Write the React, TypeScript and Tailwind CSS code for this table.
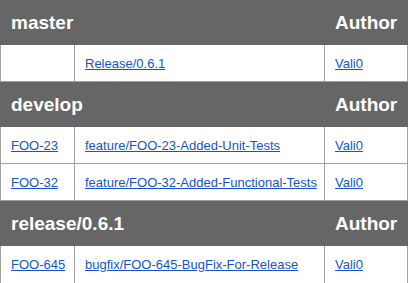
import React from "react";

type Row = { id: string; branch: string; author: string };
type Section = { name: string; rows: Row[] };

const sections: Section[] = [
  { name: "master", rows: [{ id: "", branch: "Release/0.6.1", author: "Vali0" }] },
  {
    name: "develop",
    rows: [
      { id: "FOO-23", branch: "feature/FOO-23-Added-Unit-Tests", author: "Vali0" },
      { id: "FOO-32", branch: "feature/FOO-32-Added-Functional-Tests", author: "Vali0" },
    ],
  },
  {
    name: "release/0.6.1",
    rows: [{ id: "FOO-645", branch: "bugfix/FOO-645-BugFix-For-Release", author: "Vali0" }],
  },
];

const linkCls = "text-[#1155cc] underline text-[13px] leading-[15px] whitespace-nowrap";

export default function App() {
  return (
    <div
      className="w-[408px] h-[283px] overflow-hidden bg-white"
      style={{ fontFamily: '"Liberation Sans", Arial, sans-serif' }}
    >
      {sections.map((s, si) => (
        <div key={s.name} className="flex flex-col">
          <div className="flex h-[45px] bg-[#666666] text-white font-bold text-[19px] leading-[22px] items-center">
            <div className="w-[325px] pl-[11px]">{s.name}</div>
            <div className="pl-[10px]">Author</div>
          </div>
          {s.rows.map((r, ri) => {
            const last = si === sections.length - 1 && ri === s.rows.length - 1;
            return (
              <div
                key={ri}
                className={
                  "flex h-[37px] border-l border-r border-[#a0a0a0] " +
                  (last ? "" : "border-b")
                }
              >
                <div className="w-[74px] border-r border-[#a0a0a0] pl-[10px] flex items-center">
                  {r.id && (
                    <a href="#" className={linkCls}>
                      {r.id}
                    </a>
                  )}
                </div>
                <div className="w-[250px] border-r border-[#a0a0a0] pl-[10px] flex items-center">
                  <a href="#" className={linkCls}>
                    {r.branch}
                  </a>
                </div>
                <div className="flex-1 pl-[10px] flex items-center">
                  <a href="#" className={linkCls}>
                    {r.author}
                  </a>
                </div>
              </div>
            );
          })}
        </div>
      ))}
    </div>
  );
}
